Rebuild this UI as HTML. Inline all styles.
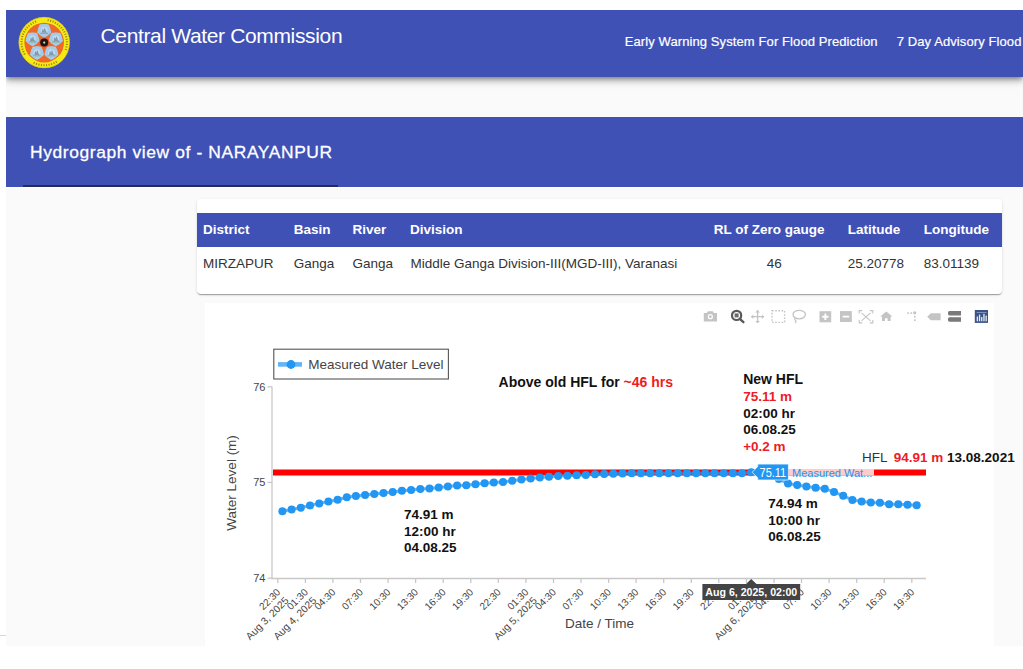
<!DOCTYPE html>
<html><head><meta charset="utf-8">
<style>
*{box-sizing:border-box}
html,body{margin:0;padding:0;background:#fff;width:1023px;height:669px;overflow:hidden;font-family:"Liberation Sans",sans-serif}
.abs{position:absolute}
#hdr{left:6px;top:10px;width:1017px;height:67px;background:#3f51b5;box-shadow:0 2px 4px -1px rgba(0,0,0,.3),0 4px 6px 0 rgba(0,0,0,.22),0 1px 12px 0 rgba(0,0,0,.16);z-index:3}
#hdr .title{left:94.5px;top:13.8px;font-size:21px;letter-spacing:-.35px;color:#fff;white-space:nowrap;line-height:24px}
#hdr .nav{top:23.8px;-webkit-text-stroke:.2px #fff;font-size:13px;color:#fff;white-space:nowrap;line-height:16px;letter-spacing:.1px}
#main{left:6px;top:77px;width:1017px;height:569px;background:#fafafa}
#band{left:6px;top:117px;width:1017px;height:69.5px;background:#3f51b5}
#band .t{left:24px;top:24.8px;-webkit-text-stroke:.3px #fff;font-size:17.4px;letter-spacing:.62px;color:#fff;white-space:nowrap;line-height:20px}
#band .ul{left:16.5px;top:67.7px;width:315.5px;height:2.2px;background:#262b5e}
#strip{left:6px;top:186.5px;width:1017px;height:1.8px;background:#fff}
#card{left:197px;top:199.4px;width:805px;height:95px;background:#fff;border-radius:4px;box-shadow:0 2px 1px -1px rgba(0,0,0,.2),0 1px 1px 0 rgba(0,0,0,.14),0 1px 3px 0 rgba(0,0,0,.12)}
#thead{left:0;top:13.6px;width:805px;height:34.4px;background:#3f51b5}
.th{font-size:13.5px;font-weight:bold;color:#fff;white-space:nowrap;top:9.2px;line-height:16px}
.td{font-size:13.5px;color:#333;white-space:nowrap;top:56.4px;line-height:16px}
#chart{left:205px;top:302.6px;width:789px;height:367px;background:#fff}
svg text{font-family:"Liberation Sans",sans-serif}
</style></head><body>
<div id="hdr" class="abs">
  <svg class="abs" style="left:12px;top:6px" width="54" height="54" viewBox="0 0 54 54">
    <circle cx="26.2" cy="26.6" r="25.5" fill="#f7e912"/>
    <circle cx="26.2" cy="26.6" r="25.3" fill="none" stroke="#cdb52c" stroke-width=".5"/>
    <g opacity=".6"><rect x="29.64" y="3.24" width="1" height="2" fill="#4a3a10" transform="rotate(10.0 30.14 4.24)"/><rect x="32.15" y="3.83" width="1" height="2" fill="#4a3a10" transform="rotate(16.5 32.65 4.83)"/><rect x="34.57" y="4.70" width="1" height="2" fill="#4a3a10" transform="rotate(23.0 35.07 5.70)"/><rect x="36.88" y="5.84" width="1" height="2" fill="#4a3a10" transform="rotate(29.5 37.38 6.84)"/><rect x="39.04" y="7.24" width="1" height="2" fill="#4a3a10" transform="rotate(36.0 39.54 8.24)"/><rect x="41.04" y="8.86" width="1" height="2" fill="#4a3a10" transform="rotate(42.5 41.54 9.86)"/><rect x="42.83" y="10.71" width="1" height="2" fill="#4a3a10" transform="rotate(49.0 43.33 11.71)"/><rect x="44.41" y="12.74" width="1" height="2" fill="#4a3a10" transform="rotate(55.5 44.91 13.74)"/><rect x="45.74" y="14.94" width="1" height="2" fill="#4a3a10" transform="rotate(62.0 46.24 15.94)"/><rect x="46.82" y="17.28" width="1" height="2" fill="#4a3a10" transform="rotate(68.5 47.32 18.28)"/><rect x="47.63" y="19.72" width="1" height="2" fill="#4a3a10" transform="rotate(75.0 48.13 20.72)"/><rect x="48.15" y="22.24" width="1" height="2" fill="#4a3a10" transform="rotate(81.5 48.65 23.24)"/><rect x="48.39" y="24.81" width="1" height="2" fill="#4a3a10" transform="rotate(88.0 48.89 25.81)"/><rect x="48.33" y="27.38" width="1" height="2" fill="#4a3a10" transform="rotate(94.5 48.83 28.38)"/><rect x="47.98" y="29.93" width="1" height="2" fill="#4a3a10" transform="rotate(101.0 48.48 30.93)"/><rect x="47.35" y="32.43" width="1" height="2" fill="#4a3a10" transform="rotate(107.5 47.85 33.43)"/><rect x="37.73" y="44.85" width="1" height="2" fill="#4a3a10" transform="rotate(148.0 38.23 45.85)"/><rect x="35.47" y="46.09" width="1" height="2" fill="#4a3a10" transform="rotate(154.5 35.97 47.09)"/><rect x="33.09" y="47.06" width="1" height="2" fill="#4a3a10" transform="rotate(161.0 33.59 48.06)"/><rect x="30.61" y="47.76" width="1" height="2" fill="#4a3a10" transform="rotate(167.5 31.11 48.76)"/><rect x="28.07" y="48.18" width="1" height="2" fill="#4a3a10" transform="rotate(174.0 28.57 49.18)"/><rect x="25.50" y="48.30" width="1" height="2" fill="#4a3a10" transform="rotate(180.5 26.00 49.30)"/><rect x="22.93" y="48.13" width="1" height="2" fill="#4a3a10" transform="rotate(187.0 23.43 49.13)"/><rect x="20.40" y="47.67" width="1" height="2" fill="#4a3a10" transform="rotate(193.5 20.90 48.67)"/><rect x="17.94" y="46.93" width="1" height="2" fill="#4a3a10" transform="rotate(200.0 18.44 47.93)"/><rect x="15.57" y="45.92" width="1" height="2" fill="#4a3a10" transform="rotate(206.5 16.07 46.92)"/><rect x="6.04" y="36.95" width="1" height="2" fill="#4a3a10" transform="rotate(240.0 6.54 37.95)"/><rect x="4.88" y="34.65" width="1" height="2" fill="#4a3a10" transform="rotate(246.5 5.38 35.65)"/><rect x="3.99" y="32.24" width="1" height="2" fill="#4a3a10" transform="rotate(253.0 4.49 33.24)"/><rect x="3.38" y="29.74" width="1" height="2" fill="#4a3a10" transform="rotate(259.5 3.88 30.74)"/><rect x="3.06" y="27.18" width="1" height="2" fill="#4a3a10" transform="rotate(266.0 3.56 28.18)"/><rect x="3.02" y="24.61" width="1" height="2" fill="#4a3a10" transform="rotate(272.5 3.52 25.61)"/><rect x="3.28" y="22.05" width="1" height="2" fill="#4a3a10" transform="rotate(279.0 3.78 23.05)"/><rect x="3.83" y="19.53" width="1" height="2" fill="#4a3a10" transform="rotate(285.5 4.33 20.53)"/><rect x="4.65" y="17.10" width="1" height="2" fill="#4a3a10" transform="rotate(292.0 5.15 18.10)"/><rect x="5.75" y="14.77" width="1" height="2" fill="#4a3a10" transform="rotate(298.5 6.25 15.77)"/><rect x="7.11" y="12.58" width="1" height="2" fill="#4a3a10" transform="rotate(305.0 7.61 13.58)"/><rect x="8.70" y="10.56" width="1" height="2" fill="#4a3a10" transform="rotate(311.5 9.20 11.56)"/><rect x="10.51" y="8.73" width="1" height="2" fill="#4a3a10" transform="rotate(318.0 11.01 9.73)"/><rect x="12.52" y="7.12" width="1" height="2" fill="#4a3a10" transform="rotate(324.5 13.02 8.12)"/><rect x="14.69" y="5.75" width="1" height="2" fill="#4a3a10" transform="rotate(331.0 15.19 6.75)"/><rect x="17.01" y="4.63" width="1" height="2" fill="#4a3a10" transform="rotate(337.5 17.51 5.63)"/></g>
    <circle cx="26.2" cy="26.6" r="19.8" fill="#ec6a2a"/>
    <circle cx="26.20" cy="14.30" r="6.3" fill="#a6cbe8"/><polygon points="26.20,20.50 20.30,16.22 22.56,9.28 29.84,9.28 32.10,16.22" fill="#a6cbe8" stroke="#a6cbe8" stroke-width="2.2" stroke-linejoin="round"/><circle cx="26.20" cy="14.20" r="3.4" fill="#c6def2" opacity=".8"/><path d="M23.6,16.8 l1,-4.4 l1,1.8 l1.3,-2.6 l.9,3.4 l1.6,1.8 z" fill="#4a5868" opacity=".5"/><rect x="22.2" y="17.0" width="8" height=".9" fill="#5d8a45" opacity=".5"/><circle cx="37.90" cy="22.80" r="6.3" fill="#a6cbe8"/><polygon points="32.00,24.71 34.25,17.78 41.54,17.78 43.79,24.71 37.90,29.00" fill="#a6cbe8" stroke="#a6cbe8" stroke-width="2.2" stroke-linejoin="round"/><circle cx="37.99" cy="22.77" r="3.4" fill="#c6def2" opacity=".8"/><path d="M35.4,25.4 l1,-4.4 l1,1.8 l1.3,-2.6 l.9,3.4 l1.6,1.8 z" fill="#4a5868" opacity=".5"/><rect x="34.0" y="25.6" width="8" height=".9" fill="#5d8a45" opacity=".5"/><circle cx="33.43" cy="36.55" r="6.3" fill="#a6cbe8"/><polygon points="29.79,31.54 37.07,31.54 39.33,38.47 33.43,42.75 27.53,38.47" fill="#a6cbe8" stroke="#a6cbe8" stroke-width="2.2" stroke-linejoin="round"/><circle cx="33.49" cy="36.63" r="3.4" fill="#c6def2" opacity=".8"/><path d="M30.9,39.2 l1,-4.4 l1,1.8 l1.3,-2.6 l.9,3.4 l1.6,1.8 z" fill="#4a5868" opacity=".5"/><rect x="29.5" y="39.4" width="8" height=".9" fill="#5d8a45" opacity=".5"/><circle cx="18.97" cy="36.55" r="6.3" fill="#a6cbe8"/><polygon points="22.61,31.54 24.87,38.47 18.97,42.75 13.07,38.47 15.33,31.54" fill="#a6cbe8" stroke="#a6cbe8" stroke-width="2.2" stroke-linejoin="round"/><circle cx="18.91" cy="36.63" r="3.4" fill="#c6def2" opacity=".8"/><path d="M16.3,39.2 l1,-4.4 l1,1.8 l1.3,-2.6 l.9,3.4 l1.6,1.8 z" fill="#4a5868" opacity=".5"/><rect x="14.9" y="39.4" width="8" height=".9" fill="#5d8a45" opacity=".5"/><circle cx="14.50" cy="22.80" r="6.3" fill="#a6cbe8"/><polygon points="20.40,24.71 14.50,29.00 8.61,24.71 10.86,17.78 18.15,17.78" fill="#a6cbe8" stroke="#a6cbe8" stroke-width="2.2" stroke-linejoin="round"/><circle cx="14.41" cy="22.77" r="3.4" fill="#c6def2" opacity=".8"/><path d="M11.8,25.4 l1,-4.4 l1,1.8 l1.3,-2.6 l.9,3.4 l1.6,1.8 z" fill="#4a5868" opacity=".5"/><rect x="10.4" y="25.6" width="8" height=".9" fill="#5d8a45" opacity=".5"/>
    <polygon points="31.60,26.60 30.32,27.42 31.19,28.67 29.69,28.93 30.02,30.42 28.53,30.09 28.27,31.59 27.02,30.72 26.20,32.00 25.38,30.72 24.13,31.59 23.87,30.09 22.38,30.42 22.71,28.93 21.21,28.67 22.08,27.42 20.80,26.60 22.08,25.78 21.21,24.53 22.71,24.27 22.38,22.78 23.87,23.11 24.13,21.61 25.38,22.48 26.20,21.20 27.02,22.48 28.27,21.61 28.53,23.11 30.02,22.78 29.69,24.27 31.19,24.53 30.32,25.78" fill="#d9542a"/>
    <circle cx="26.2" cy="26.6" r="4" fill="#1c1614"/>
    <circle cx="26.2" cy="26.6" r="1.1" fill="#d8d8d8"/>
  </svg>
  <div class="abs title">Central Water Commission</div>
  <div class="abs nav" style="left:618.7px">Early Warning System For Flood Prediction</div>
  <div class="abs nav" style="left:890.7px">7 Day Advisory Flood</div>
</div>
<div id="main" class="abs"></div>
<div id="band" class="abs">
  <div class="abs t">Hydrograph view of - NARAYANPUR</div>
  <div class="abs ul"></div>
</div>
<div id="strip" class="abs"></div>
<div id="card" class="abs">
  <div id="thead" class="abs">
    <div class="abs th" style="left:6px">District</div>
    <div class="abs th" style="left:96.8px">Basin</div>
    <div class="abs th" style="left:155.5px">River</div>
    <div class="abs th" style="left:213px">Division</div>
    <div class="abs th" style="left:516.8px">RL of Zero gauge</div>
    <div class="abs th" style="left:650.8px">Latitude</div>
    <div class="abs th" style="left:726.8px">Longitude</div>
  </div>
  <div class="abs td" style="left:6px">MIRZAPUR</div>
  <div class="abs td" style="left:96.8px">Ganga</div>
  <div class="abs td" style="left:155.5px">Ganga</div>
  <div class="abs td" style="left:213.5px">Middle Ganga Division-III(MGD-III), Varanasi</div>
  <div class="abs td" style="left:569.8px">46</div>
  <div class="abs td" style="left:650.8px">25.20778</div>
  <div class="abs td" style="left:726.8px">83.01139</div>
</div>
<div id="chart" class="abs"></div>
<div class="abs" style="left:0;top:0;width:6px;height:669px;background:#fff;z-index:10"></div><div class="abs" style="left:0;top:0;width:1023px;height:10px;background:#fff;z-index:10"></div>
<div class="abs" style="left:0;top:635px;width:6px;height:1.2px;background:#d6d6d6;z-index:11"></div>
<!--CHART--><svg class="abs" style="left:0;top:0;z-index:5" width="1023" height="669" viewBox="0 0 1023 669">
<g stroke="#c8c8c8" stroke-width="1.3" fill="none">
<path d="M272,386.5 V578.5 H926"/>
<path d="M267.5,386.8 H272"/>
<path d="M267.5,482.4 H272"/>
<path d="M267.5,578.2 H272"/>
<path d="M277.8,578.5 V583"/>
<path d="M305.4,578.5 V583"/>
<path d="M332.9,578.5 V583"/>
<path d="M360.5,578.5 V583"/>
<path d="M388.1,578.5 V583"/>
<path d="M415.6,578.5 V583"/>
<path d="M443.2,578.5 V583"/>
<path d="M470.8,578.5 V583"/>
<path d="M498.3,578.5 V583"/>
<path d="M525.9,578.5 V583"/>
<path d="M553.5,578.5 V583"/>
<path d="M581.0,578.5 V583"/>
<path d="M608.6,578.5 V583"/>
<path d="M636.1,578.5 V583"/>
<path d="M663.7,578.5 V583"/>
<path d="M691.3,578.5 V583"/>
<path d="M718.8,578.5 V583"/>
<path d="M746.4,578.5 V583"/>
<path d="M774.0,578.5 V583"/>
<path d="M801.5,578.5 V583"/>
<path d="M829.1,578.5 V583"/>
<path d="M856.7,578.5 V583"/>
<path d="M884.2,578.5 V583"/>
<path d="M911.8,578.5 V583"/>
</g>
<text x="265.5" y="390.8" text-anchor="end" font-size="11" fill="#444">76</text>
<text x="265.5" y="486.4" text-anchor="end" font-size="11" fill="#444">75</text>
<text x="265.5" y="582.2" text-anchor="end" font-size="11" fill="#444">74</text>
<text transform="translate(236,482.9) rotate(-90)" text-anchor="middle" font-size="13.5" fill="#444">Water Level (m)</text>
<text x="599.5" y="627.9" text-anchor="middle" font-size="13.5" fill="#444">Date / Time</text>
<text transform="translate(281.0,592.9) rotate(-45)" text-anchor="end" font-size="10" fill="#444"><tspan x="0" y="0">22:30</tspan><tspan x="0" y="11.8" font-size="10.3">Aug 3, 2025</tspan></text>
<text transform="translate(308.6,592.9) rotate(-45)" text-anchor="end" font-size="10" fill="#444"><tspan x="0" y="0">01:30</tspan><tspan x="0" y="11.8" font-size="10.3">Aug 4, 2025</tspan></text>
<text transform="translate(336.1,592.9) rotate(-45)" text-anchor="end" font-size="10" fill="#444"><tspan x="0" y="0">04:30</tspan></text>
<text transform="translate(363.7,592.9) rotate(-45)" text-anchor="end" font-size="10" fill="#444"><tspan x="0" y="0">07:30</tspan></text>
<text transform="translate(391.3,592.9) rotate(-45)" text-anchor="end" font-size="10" fill="#444"><tspan x="0" y="0">10:30</tspan></text>
<text transform="translate(418.8,592.9) rotate(-45)" text-anchor="end" font-size="10" fill="#444"><tspan x="0" y="0">13:30</tspan></text>
<text transform="translate(446.4,592.9) rotate(-45)" text-anchor="end" font-size="10" fill="#444"><tspan x="0" y="0">16:30</tspan></text>
<text transform="translate(474.0,592.9) rotate(-45)" text-anchor="end" font-size="10" fill="#444"><tspan x="0" y="0">19:30</tspan></text>
<text transform="translate(501.5,592.9) rotate(-45)" text-anchor="end" font-size="10" fill="#444"><tspan x="0" y="0">22:30</tspan></text>
<text transform="translate(529.1,592.9) rotate(-45)" text-anchor="end" font-size="10" fill="#444"><tspan x="0" y="0">01:30</tspan><tspan x="0" y="11.8" font-size="10.3">Aug 5, 2025</tspan></text>
<text transform="translate(556.7,592.9) rotate(-45)" text-anchor="end" font-size="10" fill="#444"><tspan x="0" y="0">04:30</tspan></text>
<text transform="translate(584.2,592.9) rotate(-45)" text-anchor="end" font-size="10" fill="#444"><tspan x="0" y="0">07:30</tspan></text>
<text transform="translate(611.8,592.9) rotate(-45)" text-anchor="end" font-size="10" fill="#444"><tspan x="0" y="0">10:30</tspan></text>
<text transform="translate(639.3,592.9) rotate(-45)" text-anchor="end" font-size="10" fill="#444"><tspan x="0" y="0">13:30</tspan></text>
<text transform="translate(666.9,592.9) rotate(-45)" text-anchor="end" font-size="10" fill="#444"><tspan x="0" y="0">16:30</tspan></text>
<text transform="translate(694.5,592.9) rotate(-45)" text-anchor="end" font-size="10" fill="#444"><tspan x="0" y="0">19:30</tspan></text>
<text transform="translate(722.0,592.9) rotate(-45)" text-anchor="end" font-size="10" fill="#444"><tspan x="0" y="0">22:30</tspan></text>
<text transform="translate(749.6,592.9) rotate(-45)" text-anchor="end" font-size="10" fill="#444"><tspan x="0" y="0">01:30</tspan><tspan x="0" y="11.8" font-size="10.3">Aug 6, 2025</tspan></text>
<text transform="translate(777.2,592.9) rotate(-45)" text-anchor="end" font-size="10" fill="#444"><tspan x="0" y="0">04:30</tspan></text>
<text transform="translate(804.7,592.9) rotate(-45)" text-anchor="end" font-size="10" fill="#444"><tspan x="0" y="0">07:30</tspan></text>
<text transform="translate(832.3,592.9) rotate(-45)" text-anchor="end" font-size="10" fill="#444"><tspan x="0" y="0">10:30</tspan></text>
<text transform="translate(859.9,592.9) rotate(-45)" text-anchor="end" font-size="10" fill="#444"><tspan x="0" y="0">13:30</tspan></text>
<text transform="translate(887.4,592.9) rotate(-45)" text-anchor="end" font-size="10" fill="#444"><tspan x="0" y="0">16:30</tspan></text>
<text transform="translate(915.0,592.9) rotate(-45)" text-anchor="end" font-size="10" fill="#444"><tspan x="0" y="0">19:30</tspan></text>
<rect x="273" y="469.5" width="653" height="6" fill="#ff0000"/>
<polyline points="282.4,511.3 291.6,509.5 300.8,507.7 310.0,505.4 319.2,503.4 328.4,501.6 337.6,499.8 346.8,497.3 355.9,496.0 365.1,495.0 374.3,494.0 383.5,492.9 392.7,491.9 401.9,490.7 411.1,489.9 420.3,489.1 429.5,488.4 438.7,487.4 447.9,486.6 457.1,485.6 466.3,485.3 475.5,484.3 484.6,483.3 493.8,482.5 503.0,481.9 512.2,480.7 521.4,479.6 530.6,478.6 539.8,477.6 549.0,476.8 558.2,476.1 567.4,475.8 576.6,475.3 585.8,475.1 595.0,474.3 604.2,474.0 613.3,473.8 622.5,473.4 631.7,473.3 640.9,473.3 650.1,473.3 659.3,473.3 668.5,473.3 677.7,473.3 686.9,473.3 696.1,473.3 705.3,473.3 714.5,473.3 723.7,473.3 732.9,473.2 742.0,473.2 751.2,472.3 760.4,472.5 769.6,474.5 778.8,478.9 788.0,483.5 797.2,485.0 806.4,486.6 815.6,487.8 824.8,488.7 834.0,491.9 843.2,495.8 852.4,499.9 861.6,501.6 870.8,502.5 879.9,502.7 889.1,504.2 898.3,504.2 907.5,504.8 916.7,505.3" fill="none" stroke="#2196f3" stroke-opacity=".7" stroke-width="3"/>
<g fill="#2196f3">
<circle cx="282.4" cy="511.3" r="4"/>
<circle cx="291.6" cy="509.5" r="4"/>
<circle cx="300.8" cy="507.7" r="4"/>
<circle cx="310.0" cy="505.4" r="4"/>
<circle cx="319.2" cy="503.4" r="4"/>
<circle cx="328.4" cy="501.6" r="4"/>
<circle cx="337.6" cy="499.8" r="4"/>
<circle cx="346.8" cy="497.3" r="4"/>
<circle cx="355.9" cy="496.0" r="4"/>
<circle cx="365.1" cy="495.0" r="4"/>
<circle cx="374.3" cy="494.0" r="4"/>
<circle cx="383.5" cy="492.9" r="4"/>
<circle cx="392.7" cy="491.9" r="4"/>
<circle cx="401.9" cy="490.7" r="4"/>
<circle cx="411.1" cy="489.9" r="4"/>
<circle cx="420.3" cy="489.1" r="4"/>
<circle cx="429.5" cy="488.4" r="4"/>
<circle cx="438.7" cy="487.4" r="4"/>
<circle cx="447.9" cy="486.6" r="4"/>
<circle cx="457.1" cy="485.6" r="4"/>
<circle cx="466.3" cy="485.3" r="4"/>
<circle cx="475.5" cy="484.3" r="4"/>
<circle cx="484.6" cy="483.3" r="4"/>
<circle cx="493.8" cy="482.5" r="4"/>
<circle cx="503.0" cy="481.9" r="4"/>
<circle cx="512.2" cy="480.7" r="4"/>
<circle cx="521.4" cy="479.6" r="4"/>
<circle cx="530.6" cy="478.6" r="4"/>
<circle cx="539.8" cy="477.6" r="4"/>
<circle cx="549.0" cy="476.8" r="4"/>
<circle cx="558.2" cy="476.1" r="4"/>
<circle cx="567.4" cy="475.8" r="4"/>
<circle cx="576.6" cy="475.3" r="4"/>
<circle cx="585.8" cy="475.1" r="4"/>
<circle cx="595.0" cy="474.3" r="4"/>
<circle cx="604.2" cy="474.0" r="4"/>
<circle cx="613.3" cy="473.8" r="4"/>
<circle cx="622.5" cy="473.4" r="4"/>
<circle cx="631.7" cy="473.3" r="4"/>
<circle cx="640.9" cy="473.3" r="4"/>
<circle cx="650.1" cy="473.3" r="4"/>
<circle cx="659.3" cy="473.3" r="4"/>
<circle cx="668.5" cy="473.3" r="4"/>
<circle cx="677.7" cy="473.3" r="4"/>
<circle cx="686.9" cy="473.3" r="4"/>
<circle cx="696.1" cy="473.3" r="4"/>
<circle cx="705.3" cy="473.3" r="4"/>
<circle cx="714.5" cy="473.3" r="4"/>
<circle cx="723.7" cy="473.3" r="4"/>
<circle cx="732.9" cy="473.2" r="4"/>
<circle cx="742.0" cy="473.2" r="4"/>
<circle cx="751.2" cy="472.3" r="4"/>
<circle cx="760.4" cy="472.5" r="4"/>
<circle cx="769.6" cy="474.5" r="4"/>
<circle cx="778.8" cy="478.9" r="4"/>
<circle cx="788.0" cy="483.5" r="4"/>
<circle cx="797.2" cy="485.0" r="4"/>
<circle cx="806.4" cy="486.6" r="4"/>
<circle cx="815.6" cy="487.8" r="4"/>
<circle cx="824.8" cy="488.7" r="4"/>
<circle cx="834.0" cy="491.9" r="4"/>
<circle cx="843.2" cy="495.8" r="4"/>
<circle cx="852.4" cy="499.9" r="4"/>
<circle cx="861.6" cy="501.6" r="4"/>
<circle cx="870.8" cy="502.5" r="4"/>
<circle cx="879.9" cy="502.7" r="4"/>
<circle cx="889.1" cy="504.2" r="4"/>
<circle cx="898.3" cy="504.2" r="4"/>
<circle cx="907.5" cy="504.8" r="4"/>
<circle cx="916.7" cy="505.3" r="4"/>
</g>
<rect x="273.8" y="349.2" width="174.6" height="29.8" fill="#fff" stroke="#555" stroke-width="1.1"/>
<path d="M278,364.4 H302" stroke="#2196f3" stroke-opacity=".7" stroke-width="4.6"/>
<circle cx="291" cy="364.5" r="4.4" fill="#2196f3"/>
<text x="308.3" y="369.4" font-size="13.5" fill="#444">Measured Water Level</text>
<text x="498.6" y="387.4" font-size="14" font-weight="bold" fill="#111">Above old HFL for <tspan fill="#ee1c25">~46 hrs</tspan></text>
<text x="743.2" y="384.2" font-size="14" font-weight="bold" fill="#111">New HFL</text>
<text x="743.2" y="400.9" font-size="13.5" font-weight="bold" fill="#ee1c25">75.11 m</text>
<text x="743.2" y="417.6" font-size="13.5" font-weight="bold" fill="#111">02:00 hr</text>
<text x="743.2" y="434.3" font-size="13.5" font-weight="bold" fill="#111">06.08.25</text>
<text x="743.2" y="451.0" font-size="13.5" font-weight="bold" fill="#ee1c25">+0.2 m</text>
<text x="404.0" y="519.0" font-size="13.5" font-weight="bold" fill="#111">74.91 m</text>
<text x="404.0" y="535.7" font-size="13.5" font-weight="bold" fill="#111">12:00 hr</text>
<text x="404.0" y="552.4" font-size="13.5" font-weight="bold" fill="#111">04.08.25</text>
<text x="768.3" y="507.8" font-size="13.5" font-weight="bold" fill="#111">74.94 m</text>
<text x="768.3" y="524.5" font-size="13.5" font-weight="bold" fill="#111">10:00 hr</text>
<text x="768.3" y="541.2" font-size="13.5" font-weight="bold" fill="#111">06.08.25</text>
<text x="862" y="461.7" font-size="13.5" fill="#333">HFL <tspan font-weight="bold" fill="#ee1c25" dx="3">94.91 m</tspan> <tspan font-weight="bold" fill="#111">13.08.2021</tspan></text>
<rect x="788.5" y="469" width="85.5" height="6.6" fill="#ffcccc"/>
<path d="M752.2,472.2 L757.7,466.6 V464.1 H788.4 V480 H757.7 V477.8 Z" fill="#2196f3" stroke="#fff" stroke-width=".7"/>
<text x="759.6" y="477" font-size="12.2" textLength="26.6" lengthAdjust="spacingAndGlyphs" fill="#fff">75.11</text>
<text x="792" y="476.6" font-size="11" fill="#2196f3">Measured Wat...</text>
<path d="M751.2,579 L756.5,584 H800.2 V600 H702.4 V584 H746 Z" fill="#444"/>
<text x="751.3" y="596.3" text-anchor="middle" font-size="10.6" font-weight="bold" fill="#fff">Aug 6, 2025, 02:00</text>
<g>
<path d="M703.8,313 h3 l1.2,-1.8 h4.8 l1.2,1.8 h3 v8.4 h-13.2 z" fill="#c4c4c4"/>
<circle cx="710.3" cy="316.7" r="2.6" fill="#fff"/><circle cx="710.3" cy="316.7" r="1.4" fill="#c4c4c4"/>
<circle cx="736.6" cy="315.4" r="4.6" fill="none" stroke="#5a5a5a" stroke-width="2.2"/>
<rect x="734.6" y="313.4" width="4" height="4" fill="#6a6a6a"/>
<path d="M739.8,318.8 L743.4,322.2" stroke="#5a5a5a" stroke-width="2.4" stroke-linecap="round"/>
<path d="M751.2,316.7 H764 M757.6,310.3 V323.1" stroke="#c4c4c4" stroke-width="1.3"/>
<path d="M751,316.7 l2.3,-2.3 v4.6 z M764.2,316.7 l-2.3,-2.3 v4.6 z M757.6,310.1 l-2.3,2.3 h4.6 z M757.6,323.3 l-2.3,-2.3 h4.6 z" fill="#c4c4c4"/>
<rect x="772" y="310.8" width="12.6" height="11.6" fill="none" stroke="#c4c4c4" stroke-width="1.4" stroke-dasharray="1.6 1.6"/>
<ellipse cx="799.2" cy="314.6" rx="6.2" ry="4.3" fill="none" stroke="#c4c4c4" stroke-width="1.3"/>
<path d="M795.5,317.5 q-1.5,2 0,3 q1.5,1 -0.5,2.5" fill="none" stroke="#c4c4c4" stroke-width="1.2"/>
<rect x="819.5" y="311.2" width="11.7" height="11.1" fill="#c4c4c4"/>
<path d="M825.35,313.6 V319.9 M822.2,316.75 H828.5" stroke="#fff" stroke-width="1.8"/>
<rect x="840" y="311.1" width="11.8" height="10.9" fill="#c4c4c4"/>
<path d="M842.6,316.6 H849.2" stroke="#fff" stroke-width="1.8"/>
<path d="M859.2,313.5 V310.6 H862.2 M869.8,310.6 H872.8 V313.5 M872.8,320 V322.9 H869.8 M862.2,322.9 H859.2 V320" fill="none" stroke="#c4c4c4" stroke-width="1.1"/>
<path d="M861.5,312.8 L870.5,320.8 M870.5,312.8 L861.5,320.8" stroke="#c4c4c4" stroke-width="1.1"/>
<path d="M880.2,316.6 L886.3,311.6 L892.4,316.6 H890.6 V321 H887.6 V318.2 H885 V321 H882 V316.6 Z" fill="#c4c4c4"/>
<g fill="#c4c4c4"><rect x="907.3" y="312.3" width="1.6" height="1.6"/><rect x="910.5" y="312.3" width="1.6" height="1.6"/><circle cx="914.7" cy="312.8" r="1.6"/><rect x="914" y="316" width="1.6" height="1.6"/><rect x="914" y="319.4" width="1.6" height="1.6"/></g>
<path d="M927.2,316.8 L930.8,313.3 H940.6 V320.3 H930.8 Z" fill="#c4c4c4"/>
<path d="M949.5,311 H961 V315.6 H949.5 Q947.9,315.6 947.9,313.3 Q947.9,311 949.5,311 Z M949.5,317.3 H961 V321.8 H949.5 Q947.9,321.8 947.9,319.55 Q947.9,317.3 949.5,317.3 Z" fill="#7a7a7a"/>
<rect x="974.8" y="310" width="13.2" height="12.9" fill="#3b5287"/>
<g fill="#e8ecf5"><rect x="976.7" y="316.5" width="1.3" height="4.8"/><rect x="978.9" y="314.6" width="1.3" height="6.7"/><rect x="981.1" y="317" width="1.3" height="4.3"/><rect x="983.3" y="313.8" width="1.3" height="7.5"/><rect x="985.5" y="315.6" width="1.3" height="5.7"/><rect x="976.7" y="312" width="9.8" height=".7" opacity=".6"/></g>
</g>
</svg><!--/CHART-->
</body></html>
